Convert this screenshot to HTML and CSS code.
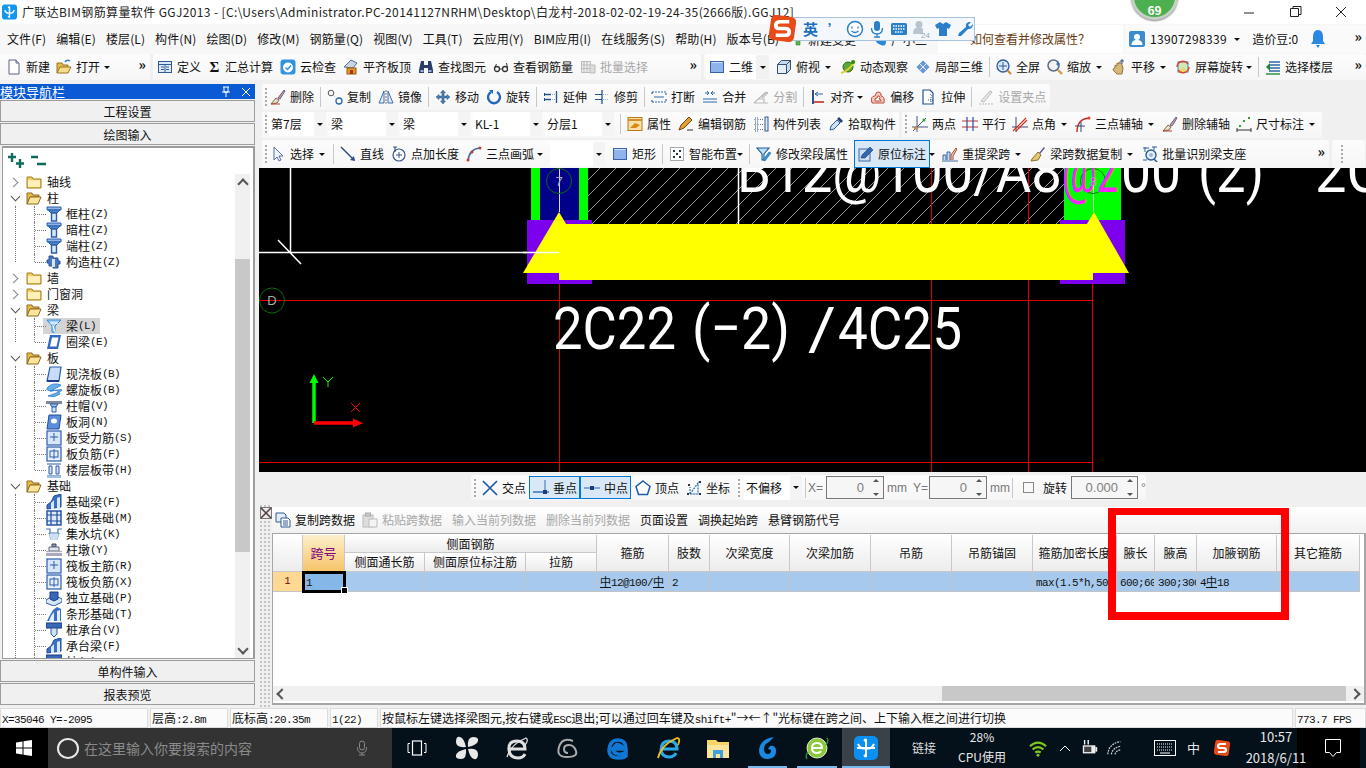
FILE: index.html
```html
<!DOCTYPE html>
<html lang="zh-CN">
<head>
<meta charset="utf-8">
<title>广联达BIM钢筋算量软件 GGJ2013</title>
<link rel="stylesheet" href="styles.css">
</head>
<body>
<svg class="defs" aria-hidden="true">
<symbol id="new" viewBox="0 0 16 16"><path d="M3 1h7l3 3v11H3z" fill="#fff" stroke="#5a6478"/><path d="M10 1v3h3" fill="#d5dbe8" stroke="#5a6478"/></symbol>
<symbol id="open" viewBox="0 0 16 16"><path d="M1 14V4h5l1 2h5v2" fill="#e8b84a" stroke="#9a7420"/><path d="M4 8h11l-3 6H1z" fill="#f8dc8e" stroke="#9a7420"/><path d="M9 3q2-3 5-1" fill="none" stroke="#3a78c8" stroke-width="1.4"/></symbol>
<symbol id="def" viewBox="0 0 16 16"><rect x="1.5" y="2.5" width="13" height="11" fill="#dfe9f5" stroke="#2c5c94"/><path d="M1.5 5.5h13M4 8h3M4 10.5h3M9 8h3M9 10.5h3M8 5.5v8" stroke="#2c5c94" fill="none"/></symbol>
<symbol id="cloud" viewBox="0 0 16 16"><rect x="0.5" y="0.5" width="15" height="15" rx="3" fill="#2f93e0"/><circle cx="8" cy="8.5" r="5" fill="#fff"/><path d="M5.5 8.5l2 2 3.500-4" fill="none" stroke="#2f93e0" stroke-width="1.500"/></symbol>
<symbol id="flush" viewBox="0 0 16 16"><path d="M1 8l7-7 6 3-4 5z" fill="#c8d4e4" stroke="#56708c"/><rect x="4" y="9" width="9" height="6" fill="#e09a28" stroke="#9a5a10"/><path d="M7 11h3v4H7z" fill="#b03018"/></symbol>
<symbol id="find" viewBox="0 0 16 16"><path d="M3 2h3v4h4V2h3l2 9v3h-5V9H6v5H1v-3z" fill="#2a3e6c"/><path d="M2.500 11h3v2h-3zM10.500 11h3v2h-3z" fill="#9cb4dc"/></symbol>
<symbol id="glass" viewBox="0 0 16 16"><circle cx="4" cy="10" r="2.500" fill="none" stroke="#333" stroke-width="1.300"/><circle cx="12" cy="10" r="2.500" fill="none" stroke="#333" stroke-width="1.300"/><path d="M6.500 10h3M1.500 9l2-4M14.500 9l-1-5" fill="none" stroke="#333"/></symbol>
<symbol id="batch" viewBox="0 0 16 16"><path d="M1.500 2.500h9v11h-9zM4 2.500v11M7 2.500v11M1.500 6h9M1.500 9.500h9" fill="#eee" stroke="#bbb"/><path d="M10 6h5v8h-5z" fill="#ddd" stroke="#bbb"/></symbol>
<symbol id="d2" viewBox="0 0 16 16"><rect x="1.500" y="2.500" width="13" height="11" fill="#8fb4ec" stroke="#3a62a8"/><path d="M2.500 3.500h11" stroke="#cfe0fa"/></symbol>
<symbol id="top" viewBox="0 0 16 16"><path d="M1.500 5.500l4-4h9v9l-4 4h-9z" fill="#c8dcec" stroke="#34506c"/><path d="M1.500 5.500h9v9M10.500 5.500l4-4" fill="none" stroke="#34506c"/><path d="M2 6h8v8H2z" fill="#e6eff6"/></symbol>
<symbol id="orbit" viewBox="0 0 16 16"><circle cx="8" cy="8" r="5" fill="#5da832" stroke="#2e6818"/><path d="M1 14Q9 12 15 2" fill="none" stroke="#d8d030" stroke-width="2"/><circle cx="13" cy="3" r="2" fill="#2e8818"/></symbol>
<symbol id="l3d" viewBox="0 0 16 16"><path d="M1 8l7-7 7 7-7 7z" fill="#6c9ad8" stroke="#2a4e84"/><path d="M4.500 4.500l7 7M8 1l7 7M1 8l7 7M11.500 4.500l-7 7M8 1L1 8M15 8l-7 7" stroke="#e4eefa" fill="none"/></symbol>
<symbol id="full" viewBox="0 0 16 16"><circle cx="7" cy="7" r="6" fill="#dce8fa" stroke="#2c5c9c" stroke-width="1.300"/><path d="M7 3v8M3 7h8" stroke="#2c5c9c"/><path d="M11.500 11.500l3.500 3.500" stroke="#d08820" stroke-width="2"/></symbol>
<symbol id="zoom" viewBox="0 0 16 16"><circle cx="6.500" cy="6.500" r="5.500" fill="#f4f4f4" stroke="#5c6c84" stroke-width="1.500"/><path d="M11 2.500v5M9 5h4" stroke="#3068b8"/><path d="M11 11l4 4" stroke="#caa040" stroke-width="2.400"/></symbol>
<symbol id="pan" viewBox="0 0 16 16"><path d="M4 9V6l2 1V4l2 1V3l2 1 1 2 1 3-1 6H6L2 11l1-2z" fill="#d8b878" stroke="#94743c"/><path d="M11 0v5M9 2h4" stroke="#34507c"/></symbol>
<symbol id="scr" viewBox="0 0 16 16"><rect x="3" y="3" width="10" height="10" fill="#cfe8b8" stroke="#3a88c0"/><path d="M3 13l5-5 5 5" fill="#e8d870"/><path d="M2 8a6 6 0 0 1 11-3M14 8a6 6 0 0 1-11 3" fill="none" stroke="#e04030" stroke-width="1.400"/></symbol>
<symbol id="floor" viewBox="0 0 16 16"><path d="M4 3h11M4 6h11M4 9h11M4 12h11" stroke="#2c68a8" stroke-width="1.600"/><path d="M1 8l4-4v8z" fill="#1c8c38"/><path d="M1 15h14" stroke="#1c8c38" stroke-width="1.400"/></symbol>
<symbol id="del" viewBox="0 0 16 16"><path d="M8 9L14 1l1 1-5 8z" fill="#caa868" stroke="#6c5ca0"/><path d="M6 9l3 2-2 3-6 1z" fill="#e8e0d0" stroke="#806848"/><path d="M1 15h9" stroke="#b84030"/></symbol>
<symbol id="copy" viewBox="0 0 16 16"><circle cx="4" cy="4" r="2.800" fill="none" stroke="#5a5a5a"/><circle cx="12" cy="12" r="3" fill="none" stroke="#2c68a8" stroke-width="1.300"/><path d="M6 6l4 4" stroke="#aaa" stroke-dasharray="1 1"/></symbol>
<symbol id="mirror" viewBox="0 0 16 16"><path d="M1 14L6 2v12zM15 14L10 2v12z" fill="#e4ecf8" stroke="#3e6ca8"/><path d="M8 1v14" stroke="#777" stroke-dasharray="2 1"/></symbol>
<symbol id="move" viewBox="0 0 16 16"><path d="M8 1l2.500 3H9v3h3V5.500L15 8l-3 2.500V9H9v3h1.500L8 15l-2.500-3H7V9H4v1.500L1 8l3-2.500V7h3V4H5.500z" fill="#4a7cb0" stroke="#2c5480" stroke-width=".5"/></symbol>
<symbol id="rotate" viewBox="0 0 16 16"><path d="M5 3a6 6 0 1 0 6 0" fill="none" stroke="#2468c0" stroke-width="2.400"/><path d="M3 1l4 0 0 4z" fill="#2468c0"/></symbol>
<symbol id="extend" viewBox="0 0 16 16"><path d="M13.500 2v12M2 5.500h6M2 10.500h6" stroke="#24528c" stroke-width="1.300"/><path d="M1 4h1v3H1zM1 9h1v3H1z" fill="#24528c"/><path d="M9 5.500h3M9 10.500h3" stroke="#8fb0d8" stroke-dasharray="1 1"/></symbol>
<symbol id="trim" viewBox="0 0 16 16"><path d="M8 1v14" stroke="#24528c" stroke-width="1.300"/><path d="M1 5.500h7M1 10.500h7" stroke="#24528c"/><path d="M9 5.500h6M9 10.500h6" stroke="#9cb8dc" stroke-dasharray="1 1"/></symbol>
<symbol id="brk" viewBox="0 0 16 16"><path d="M1 3h14v3M1 3v3M1 13h14v-3M1 13v-3" fill="none" stroke="#2c68a8" stroke-dasharray="2 1" stroke-width="1.200"/><path d="M3 8h10" stroke="#2c68a8"/></symbol>
<symbol id="mrg" viewBox="0 0 16 16"><path d="M1 13h14M1 10h14" stroke="#2c68a8" stroke-width="1.200"/><path d="M3 4h4M9 4h4M5 2l2 2-2 2M11 2L9 4l2 2" fill="none" stroke="#2c68a8"/></symbol>
<symbol id="split" viewBox="0 0 16 16"><path d="M1 14L13 3M1 14h14M5 10h6v4" fill="none" stroke="#bbb" stroke-width="1.200"/><path d="M9 8l5-5 1 1-5 5z" fill="#ddd" stroke="#bbb"/></symbol>
<symbol id="align" viewBox="0 0 16 16"><path d="M3 1v14" stroke="#1c3c78" stroke-width="1.800"/><path d="M4 13h10" stroke="#c03020" stroke-width="1.600"/><path d="M5 5h8M5 5l3-2M5 5l3 2" stroke="#2c68a8" fill="none"/></symbol>
<symbol id="offs" viewBox="0 0 16 16"><path d="M2 14Q0 7 5 7q1-5 4-4 3 1 2 4 4 0 3 7z" fill="#f4ccc4" stroke="#c04838"/><path d="M5 12q-1-3 2-3 0-3 2-2t0 3q2 0 2 2z" fill="#fff" stroke="#c04838"/></symbol>
<symbol id="strc" viewBox="0 0 16 16"><path d="M2 1h7l3 3v11H2z" fill="#fff" stroke="#24528c" stroke-width="1.200"/><path d="M9 5l3 3M7 11h6M10 8v6" stroke="#24528c" stroke-dasharray="1 1"/></symbol>
<symbol id="grip" viewBox="0 0 16 16"><path d="M3 12L12 2l2 1-8 10z" fill="#e8e8e8" stroke="#bbb"/><path d="M1 15h14" stroke="#bbb" stroke-dasharray="2 1"/></symbol>
<symbol id="prop" viewBox="0 0 16 16"><rect x="1" y="1.500" width="14" height="13" fill="#f8e0a8" stroke="#b87818"/><path d="M1 4h14" stroke="#d09030" stroke-width="2"/><path d="M3 12l5-5 5 2-4 3z" fill="#d88818"/></symbol>
<symbol id="edit" viewBox="0 0 16 16"><path d="M1 14l2-5L11 1l3 3-8 8z" fill="#e0a030" stroke="#704810"/><path d="M9 14h6" stroke="#333"/></symbol>
<symbol id="list" viewBox="0 0 16 16"><path d="M2 2h3v3H2zM2 7h3v3H2zM2 12h3v3H2z" fill="#fff" stroke="#2c5c94" stroke-dasharray="1 1"/><path d="M7 3.500h4M7 8.500h4M7 13.500h4" stroke="#777" stroke-dasharray="1 1"/><rect x="12" y="1" width="3" height="14" fill="#e0e8f4" stroke="#2c5c94"/></symbol>
<symbol id="pick" viewBox="0 0 16 16"><path d="M2 14l1-4 6-6 3 3-6 6z" fill="#cfe2f8" stroke="#2c5c94"/><path d="M9 3l2-2 4 4-2 2z" fill="#2c3e78"/></symbol>
<symbol id="twop" viewBox="0 0 16 16"><path d="M0 11h16M5 0v16M1 15L14 2" stroke="#445a80"/><path d="M2 13l2-1-1-1z" fill="#c03020"/><circle cx="12" cy="4" r="1.500" fill="#30a030"/><circle cx="4" cy="12" r="1.500" fill="#e08020"/></symbol>
<symbol id="para" viewBox="0 0 16 16"><path d="M0 5h16M0 11h16" stroke="#c03030" stroke-width="1.200"/><path d="M5 1v14M11 1v14" stroke="#2c50a0" stroke-width="1.200"/></symbol>
<symbol id="ang" viewBox="0 0 16 16"><path d="M0 11h16M4 1v15" stroke="#404870"/><path d="M1 15L14 2M4 15L15 4" stroke="#d03020" stroke-width="1.200"/></symbol>
<symbol id="arc3" viewBox="0 0 16 16"><path d="M2 16Q2 3 14 2" fill="none" stroke="#c03020" stroke-width="1.400"/><path d="M0 10h10M6 6v10" stroke="#30487c"/><circle cx="14" cy="2" r="1.500" fill="#e04030"/></symbol>
<symbol id="dim" viewBox="0 0 16 16"><path d="M1 12v4M15 12v4M1 14h14" stroke="#333"/><path d="M3 9h2v2H3zM7 4h2v2H7zM12 1h2v2h-2z" fill="#30a030"/></symbol>
<symbol id="sel" viewBox="0 0 16 16"><path d="M4 1v13l3-3 2 4 2-1-2-4h4z" fill="#f0f4fa" stroke="#5a70a0"/></symbol>
<symbol id="line" viewBox="0 0 16 16"><path d="M1 1l13 13" stroke="#2c4c84" stroke-width="1.400"/><path d="M15 15l-5-1 4-4z" fill="#2c4c84"/></symbol>
<symbol id="plen" viewBox="0 0 16 16"><circle cx="8" cy="9" r="6" fill="#fff" stroke="#3c5488" stroke-width="1.200"/><path d="M8 6v6M5 9h6" stroke="#3c5488"/><path d="M2 1h4M4 1v5" stroke="#3c5488" stroke-width="1.200"/></symbol>
<symbol id="arcc" viewBox="0 0 16 16"><path d="M2 15Q3 3 14 2" fill="none" stroke="#3c6ca8" stroke-width="1.600"/><circle cx="2" cy="14" r="1.500" fill="#c04030"/><circle cx="14" cy="2" r="1.500" fill="#c04030"/><circle cx="6" cy="6" r="1.500" fill="#c04030"/></symbol>
<symbol id="smart" viewBox="0 0 16 16"><rect x="1.500" y="1.500" width="13" height="13" fill="#fff" stroke="#556" stroke-dasharray="1 1"/><path d="M4 4h2v2H4zM10 4h2v2h-2zM7 7h2v2H7zM4 10h2v2H4zM10 10h2v2h-2z" fill="#234"/></symbol>
<symbol id="modi" viewBox="0 0 16 16"><path d="M1 2h12L8 8v6H6V8z" fill="#bfe0f8" stroke="#1c5c98" stroke-width="1.100"/><path d="M7 14l6-8 2 1-6 8z" fill="#3a98d8" stroke="#1c5c98" stroke-width=".6"/></symbol>
<symbol id="inpl" viewBox="0 0 16 16"><rect x="1" y="3" width="11" height="12" fill="#cfe0f4" stroke="#3a68a8"/><path d="M3 12l1-3 8-8 3 3-8 8z" fill="#3468b0" stroke="#1c3c70" stroke-width=".6"/></symbol>
<symbol id="rext" viewBox="0 0 16 16"><path d="M1 14V9h3v5M5 14V6h3v8" fill="#c8d8ec" stroke="#3c68a0"/><path d="M9 14V9L14 2l1 1-4 7v4" fill="#e8d8c0" stroke="#b84830"/><path d="M0 15h16" stroke="#3c68a0"/></symbol>
<symbol id="cdat" viewBox="0 0 16 16"><path d="M9 7l5-6 1 1-5 6z" fill="#5a4c98"/><path d="M8 6l3 3-3 5-7 1 1-2z" fill="#e4c870" stroke="#8c7030"/></symbol>
<symbol id="bid" viewBox="0 0 16 16"><circle cx="9" cy="9" r="5" fill="#e8eef8" stroke="#2c5c94" stroke-width="1.400"/><circle cx="9" cy="9" r="2" fill="#9cb8dc"/><path d="M1 2h6M3 1v5M10 1h5M12 1v3M1 14h4" stroke="#2c5c94"/><path d="M12 13l3 3" stroke="#2c5c94" stroke-width="1.600"/></symbol>
<symbol id="xi" viewBox="0 0 16 16"><path d="M1 1l14 14M15 1L1 15" stroke="#1c5ca8" stroke-width="1.700"/></symbol>
<symbol id="perp" viewBox="0 0 16 16"><path d="M0 12h16" stroke="#2a6cb8" stroke-width="1.400"/><path d="M12 0v12" stroke="#2a6cb8"/><rect x="10" y="10" width="4" height="4" fill="#1c3c78"/></symbol>
<symbol id="mid" viewBox="0 0 16 16"><path d="M0 8h16" stroke="#5a8cc8" stroke-width="1.400"/><rect x="6" y="6" width="4" height="4" fill="#1c3c78"/></symbol>
<symbol id="vtx" viewBox="0 0 16 16"><path d="M8 1l7 5.500-2.500 8h-9L1 6.500z" fill="#fff" stroke="#1c5ca8" stroke-width="1.500"/></symbol>
<symbol id="crd" viewBox="0 0 16 16"><path d="M4 14L12 3v11zM4 14V7M4 14h8" fill="none" stroke="#2a6cb8" stroke-dasharray="2 1" stroke-width="1.200"/><path d="M2 4h2v2H2zM13 1h2v2h-2zM1 13h2v2H1zM13 13h2v2h-2z" fill="#333"/></symbol>
<symbol id="copyd" viewBox="0 0 16 16"><path d="M1 1h8l2 2v7H1z" fill="#e4ecf8" stroke="#2c5c94"/><path d="M6 6h7l2 2v7H6z" fill="#fff" stroke="#2c5c94"/><path d="M8 9h5M8 11h5M8 13h5" stroke="#2c5c94"/></symbol>
<symbol id="pasted" viewBox="0 0 16 16"><rect x="1" y="3" width="10" height="12" fill="#ddd" stroke="#bbb"/><rect x="3.500" y="1" width="5" height="3" fill="#ccc" stroke="#aaa"/><path d="M7 7h8v8H7z" fill="#f4f4f4" stroke="#bbb"/></symbol>
<symbol id="fc" viewBox="0 0 16 16"><path d="M1 14V3h5l1 2h8v9z" fill="#f4cc60" stroke="#a07c20"/><path d="M2 6h12v7H2z" fill="#fff0b8"/></symbol>
<symbol id="fo" viewBox="0 0 16 16"><path d="M1 14V3h5l1 2h6v2H4z" fill="#e8b84a" stroke="#8c6c20"/><path d="M4 7h11l-3 7H1z" fill="#fce49c" stroke="#8c6c20"/></symbol>
<symbol id="col" viewBox="0 0 16 16"><path d="M1 1h14v3H1z" fill="#8cb4e8" stroke="#2c5cac"/><path d="M2 4h12l-3 3H5z" fill="#4c84d0" stroke="#2c5cac"/><path d="M5.500 7h5v8h-5z" fill="#d4e6fa" stroke="#2c5cac" stroke-width="1.400"/></symbol>
<symbol id="ccol" viewBox="0 0 16 16"><path d="M3 2h4v2h5v3h2v3h-2v4H7v-2H3v-3H1V6h2z" fill="#4878c8" stroke="#2c4c90"/><path d="M6 5h3v8H6z" fill="#d8e6fa"/></symbol>
<symbol id="beam" viewBox="0 0 16 16"><path d="M1 2h14L9 8v6H6V8z" fill="#a8d0f4" stroke="#2c88d8"/><path d="M4 5h8M7 8l2 6" stroke="#fff"/></symbol>
<symbol id="ring" viewBox="0 0 16 16"><path d="M4 1h11l-3 14H1z" fill="#3468c0"/><path d="M6 3.500h6.500L10.500 12.500H4z" fill="#fff"/></symbol>
<symbol id="slab" viewBox="0 0 16 16"><path d="M4 1h11l-2 14H1z" fill="#c8dcf8" stroke="#2c5cb0" stroke-width="1.200"/><path d="M1 15h12" stroke="#1c3c90" stroke-width="2"/></symbol>
<symbol id="spir" viewBox="0 0 16 16"><path d="M15 3Q7 0 2 5t9 3-9 6q7 2 12-2-2-5-8-3t8-5z" fill="#68b0ec" stroke="#2c78c8" stroke-width=".8"/></symbol>
<symbol id="cap" viewBox="0 0 16 16"><path d="M0 3h16v3H0z" fill="#80889a"/><path d="M4 6h8l-2 3H6z" fill="#a8c4ec" stroke="#2c5cac"/><path d="M6 9h4v5H6z" fill="#d8e8fa" stroke="#2c5cac"/></symbol>
<symbol id="hole" viewBox="0 0 16 16"><path d="M3 1h12l-2 14H1z" fill="#5c8cdc" stroke="#1c4ca0"/><ellipse cx="8" cy="7" rx="3" ry="2.500" fill="#fff"/></symbol>
<symbol id="gs" viewBox="0 0 16 16"><rect x="1" y="1" width="14" height="14" fill="#d8e6fa" stroke="#2c5cac" stroke-width="1.200"/><path d="M8 3v8M4 7h8" stroke="#2c5cac"/></symbol>
<symbol id="gf" viewBox="0 0 16 16"><rect x="1" y="1" width="14" height="14" fill="#e8f0fc" stroke="#2c5cac" stroke-width="1.200"/><rect x="4" y="5" width="8" height="6" fill="none" stroke="#2c5cac"/><path d="M8 3v10" stroke="#2c5cac"/></symbol>
<symbol id="band" viewBox="0 0 16 16"><path d="M1 2h14M1 14h14" stroke="#2c5cac" stroke-width="1.200"/><path d="M3 4h3v8H3zM10 4h3v8h-3z" fill="#cfe0f8" stroke="#2c5cac"/><path d="M1 14h14v2H1z" fill="#9cc0ec"/></symbol>
<symbol id="fbm" viewBox="0 0 16 16"><path d="M1 15V11l4-3 3-6 7-2v13z" fill="#3a70c4" stroke="#1c4c98"/><path d="M5 15V9l3-3v9zM11 4v11h3V3z" fill="#d8e6fa"/></symbol>
<symbol id="raft" viewBox="0 0 16 16"><rect x="1" y="1" width="14" height="14" fill="#dfeafa" stroke="#1c4ca0" stroke-width="1.400"/><path d="M1 5h14M1 11h14M5 1v14M11 1v14" stroke="#1c4ca0" stroke-width="1.200"/></symbol>
<symbol id="pit" viewBox="0 0 16 16"><path d="M0 3h4v4h8V3h4M3 7l2 6h6l2-6" fill="none" stroke="#4878b8" stroke-width="1.200"/><path d="M3 8h10l-2 6H5z" fill="#cfe0f4"/></symbol>
<symbol id="pier" viewBox="0 0 16 16"><path d="M6 2h4v3H6z" fill="#8098c0" stroke="#445"/><path d="M3 5h10v4H3z" fill="#dfe6f0" stroke="#667"/><path d="M0 9h16v5H0z" fill="#aab"/><path d="M0 10h16v1H0z" fill="#eef"/></symbol>
<symbol id="indep" viewBox="0 0 16 16"><path d="M0 10l8-5 8 4v3l-8 4-8-3z" fill="#d8e6fa" stroke="#2c5cac"/><path d="M4 2h8v7l-4 2-4-2z" fill="#3a68b8" stroke="#1c3c80"/></symbol>
<symbol id="strip" viewBox="0 0 16 16"><path d="M1 15l3-6 3-5 4-3 4 2v12z" fill="#3a70c4"/><path d="M3 15l2-5 3-4v9zM11 5l3-1v11h-3z" fill="#e4eefa"/></symbol>
<symbol id="pile" viewBox="0 0 16 16"><path d="M0 1h16v5H0z" fill="#3868b8" stroke="#1c3c80"/><path d="M5 6h6v6l-3 3-3-3z" fill="#cfe0f4" stroke="#2c5c94"/></symbol>
<symbol id="win" viewBox="0 0 16 16"><path d="M0 2.500l6.500-1v6H0zM7.500 1.300L16 0v7.500H7.500zM0 8.500h6.500v6l-6.500-1zM7.500 8.500H16V16l-8.500-1.300z" fill="#fff"/></symbol>
<symbol id="mic" viewBox="0 0 16 16"><rect x="5.500" y="1" width="5" height="9" rx="2.500" fill="none" stroke="#8a8a8a"/><path d="M3.500 7v1.500a4.500 4.500 0 0 0 9 0V7M8 13v2M5 15h6" fill="none" stroke="#8a8a8a"/></symbol>
<symbol id="tv" viewBox="0 0 20 16"><rect x="5.500" y="1" width="9" height="14" fill="none" stroke="#fff" stroke-width="1.200"/><path d="M3 3.500H1v9h2M17 3.500h2v9h-2" fill="none" stroke="#fff"/></symbol>
<symbol id="pin" viewBox="0 0 24 24"><path d="M11 11Q1 12 1 6t4-5 6 10zM13 11Q12 1 18 1t5 4-10 6zM13 13q10-1 10 5t-4 5-6-10zM11 13q1 10-5 10t-5-4 10-6z" fill="#e8e8e8"/></symbol>
<symbol id="em" viewBox="0 0 24 24"><path d="M4 13h16q0-8-8-8-9 0-8 9 1 8 9 8 5 0 7-4" fill="none" stroke="#e0e0e0" stroke-width="3"/><path d="M2 21Q6 8 21 2q3 2-1 7" fill="none" stroke="#e0e0e0" stroke-width="1.300"/></symbol>
<symbol id="swirl" viewBox="0 0 24 24"><path d="M17 5Q6 1 3 11t8 10 9-6-7-6-5 4 4 4" fill="none" stroke="#aaa" stroke-width="2"/></symbol>
<symbol id="edge" viewBox="0 0 24 24"><path d="M4 13h15q0-9-8-9-8 0-9 10 0 8 10 8 5 0 7-2v-4q-4 3-8 2-5-1-5-5M8 10q2-3 6 0z" fill="none" stroke="#0f78d4" stroke-width="3.500"/></symbol>
<symbol id="ie" viewBox="0 0 24 24"><path d="M5 13h15q0-8-8-8-8 0-8 9 1 7 8 7 5 0 7-4" fill="none" stroke="#2aa8e8" stroke-width="3"/><path d="M1 22Q4 9 20 2q4 0 1 7" fill="none" stroke="#e8c020" stroke-width="1.800"/></symbol>
<symbol id="folder" viewBox="0 0 24 24"><path d="M1 4h9l2 2h11v16H1z" fill="#f8d468"/><path d="M1 9h22v13H1z" fill="#fce69c"/><path d="M7 14h10v8h-3v-4h-4v4H7z" fill="#42a0e0"/></symbol>
<symbol id="gg" viewBox="0 0 24 24"><path d="M18 1Q4 3 3 14q0 9 9 9 9-1 8-9-1-5-6-4l-2 3 3 1q0 4-3 4-4 0-4-5 0-5 5-7z" fill="#1a88e0"/></symbol>
<symbol id="ge" viewBox="0 0 24 24"><circle cx="12" cy="12" r="10" fill="#8cc83c" stroke="#dff0c0"/><path d="M7 12h10q0-5-5-5t-5 5 5 5q3 0 4-2" fill="none" stroke="#fff" stroke-width="2"/><path d="M2 23Q0 20 3 16M22 2q2 3-1 7" fill="none" stroke="#2a8838" stroke-width="1.500"/></symbol>
<symbol id="app" viewBox="0 0 24 24"><rect width="24" height="24" rx="5" fill="#0a90f0"/><path d="M12 3v18M12 3l-2 2M12 21l-2-2M3 12h18M4 8q3 6 8 4M20 8q-3 6-8 4" fill="none" stroke="#fff" stroke-width="2"/></symbol>
<symbol id="wifi" viewBox="0 0 20 20"><path d="M1 8q9-8 18 0M4 11.500q6-5 12 0M7 15q3-2 6 0" fill="none" stroke="#7cc820" stroke-width="2.400"/><circle cx="10" cy="18" r="1.600" fill="#7cc820"/></symbol>
<symbol id="batt" viewBox="0 0 20 20"><rect x="2" y="7" width="14" height="9" fill="#eee"/><rect x="16" y="9" width="2" height="5" fill="#eee"/><path d="M4 1v5M8 1v5" stroke="#fff" stroke-width="1.500"/><rect x="3.500" y="8.500" width="8" height="6" fill="#444"/></symbol>
<symbol id="wifid" viewBox="0 0 20 20"><path d="M2 17Q3 5 16 3M6 17q1-7 10-9M10 17q1-4 6-5" fill="none" stroke="#ccc" stroke-width="1.400" stroke-dasharray="2 1"/></symbol>
<symbol id="kbd" viewBox="0 0 22 16"><rect x=".5" y=".5" width="21" height="15" fill="none" stroke="#fff"/><path d="M3 4h16M3 7h16M3 10h16" stroke="#fff" stroke-dasharray="1 1"/><path d="M6 13h10" stroke="#fff"/></symbol>
<symbol id="sg" viewBox="0 0 16 16"><rect x=".5" y=".5" width="15" height="15" rx="3" fill="#e84a18" transform="rotate(8 8 8)"/><path d="M12 4H6.500Q4 4 4 6t2.500 2h3Q12 8 12 10t-2.500 2H4" fill="none" stroke="#fff" stroke-width="2.200"/></symbol>
<symbol id="msg" viewBox="0 0 16 18"><path d="M.5.500h15v13h-4l-3.500 4-3.500-4h-4z" fill="none" stroke="#fff"/></symbol>
<symbol id="user" viewBox="0 0 16 16"><rect width="16" height="16" rx="2" fill="#3c8cd0"/><circle cx="8" cy="6" r="3" fill="#fff"/><path d="M2.500 14q0-5 5.500-5t5.500 5z" fill="#fff"/></symbol>
<symbol id="bell" viewBox="0 0 16 20"><path d="M8 1q-5 0-5 7v4l-2 3h14l-2-3V8q0-7-5-7z" fill="#2a88e4"/><path d="M6 16h4l-2 3z" fill="#2a88e4"/></symbol>
<symbol id="logo" viewBox="0 0 16 16"><rect width="16" height="16" rx="3" fill="#1496ee"/><path d="M8 2v12M8 2L6.500 3.500M8 14l-1.500-1.500M3 6q1 4 5 3M13 6q-1 4-5 3" fill="none" stroke="#fff" stroke-width="1.500"/></symbol>
<symbol id="smile" viewBox="0 0 18 18"><circle cx="9" cy="9" r="7.500" fill="#fff" stroke="#2a7fc8" stroke-width="1.500"/><path d="M6 6.500v2M12 6.500v2M5.500 11q3.500 3 7 0" fill="none" stroke="#2a7fc8" stroke-width="1.300"/></symbol>
<symbol id="imic" viewBox="0 0 18 18"><rect x="6" y="1" width="6" height="10" rx="3" fill="#2a7fc8"/><path d="M3.500 8q0 6 5.500 6t5.500-6M9 14v3M6 17h6" fill="none" stroke="#2a7fc8" stroke-width="1.300"/></symbol>
<symbol id="ikbd" viewBox="0 0 18 18"><rect x="1" y="3" width="16" height="12" rx="1.500" fill="#2a7fc8"/><path d="M3 6h12M3 9h12M5 12h8" stroke="#fff" stroke-width="1.300" stroke-dasharray="1.500 1"/></symbol>
<symbol id="ipers" viewBox="0 0 18 18"><circle cx="7" cy="4.500" r="3.500" fill="#b8c4d0"/><path d="M1 14q0-7 6-7 3 0 4 2v5z" fill="#b8c4d0"/><text x="9" y="17.500" font-size="8" font-family="Liberation Sans" fill="#9aa8b8">24</text></symbol>
<symbol id="ishirt" viewBox="0 0 18 18"><path d="M6 2l3 2 3-2 5 3-2 4-2-1v8H5V8L3 9 1 5z" fill="#2a7fc8"/></symbol>
<symbol id="iwr" viewBox="0 0 18 18"><path d="M2 16l1-3 7-6q-1-4 3-5l2 0-3 3 2 2 3-3q0 5-5 5l-7 7z" fill="#2a7fc8"/></symbol>
<symbol id="plus" viewBox="0 0 20 18"><path d="M5 1v9M1 5h8M13 7v9M9 11.500h8" stroke="#0e6c5c" stroke-width="2.400"/></symbol>
<symbol id="minus" viewBox="0 0 20 18"><path d="M2 5h7M8 12h9" stroke="#0e6c5c" stroke-width="2.400"/></symbol>
<symbol id="chg" viewBox="0 0 12 12"><path d="M1 6l5-5 5 5H8v5H4V6z" fill="#5ab848" stroke="#2e8028" stroke-width=".6"/></symbol>
<symbol id="gxi" viewBox="0 0 12 12"><path d="M1 7q0-6 5-6t5 6-5 4-5-4z" fill="#2a88d8"/></symbol>
</svg>

<div class="app">
  <header class="title">
    <svg class="logo"><use href="#logo"/></svg>
    <span class="ttl">广联达BIM钢筋算量软件 GGJ2013 - [C:\Users\Administrator.PC-20141127NRHM\Desktop\白龙村-2018-02-02-19-24-35(2666版).GGJ12]</span>
    <div class="wctl">
      <svg class="wb" viewBox="0 0 46 24"><path d="M18 13h10" stroke="#222"/></svg>
      <svg class="wb" viewBox="0 0 46 24"><path d="M18.500 8.500h8v8h-8zM21 8V6.500h8v8h-2" fill="none" stroke="#222"/></svg>
      <svg class="wb" viewBox="0 0 46 24"><path d="M18 7l10 10M28 7L18 17" stroke="#222"/></svg>
    </div>
  </header>

  <nav class="menu">
    <div class="menus">
      <span>文件(F)</span><span>编辑(E)</span><span>楼层(L)</span><span>构件(N)</span><span>绘图(D)</span><span>修改(M)</span><span>钢筋量(Q)</span><span>视图(V)</span><span>工具(T)</span><span>云应用(Y)</span><span>BIM应用(I)</span><span>在线服务(S)</span><span>帮助(H)</span><span>版本号(B)</span>
    </div>
    <div class="promo">
      <svg class="i12"><use href="#chg"/></svg><span>新建变更</span><svg class="i12 g2"><use href="#gxi"/></svg><span class="gx">广小二</span>
    </div>
    <div class="ask">如何查看并修改属性？</div>
    <div class="acct">
      <svg class="i"><use href="#user"/></svg><span class="num13">13907298339</span><span class="ar"></span>
      <span class="bean">造价豆:0</span>
      <svg class="bell"><use href="#bell"/></svg>
      <span class="more">»</span>
    </div>
  </nav>

  <div class="tbrow r1">
    <div class="tb sa">
      <span class="it"><svg class="i"><use href="#new"/></svg>新建</span>
      <span class="it"><svg class="i"><use href="#open"/></svg>打开</span><span class="ar mn"></span>
      <span class="more">»</span>
    </div>
    <div class="tb sb">
      <span class="it"><svg class="i"><use href="#def"/></svg>定义</span>
      <span class="it"><b class="sig">Σ</b>汇总计算</span>
      <span class="it"><svg class="i"><use href="#cloud"/></svg>云检查</span>
      <span class="it"><svg class="i"><use href="#flush"/></svg>平齐板顶</span>
      <span class="it"><svg class="i"><use href="#find"/></svg>查找图元</span>
      <span class="it"><svg class="i"><use href="#glass"/></svg>查看钢筋量</span>
      <span class="it off"><svg class="i"><use href="#batch"/></svg>批量选择</span>
      <span class="more">»</span>
    </div>
    <div class="tb sc">
      <span class="it wh"><svg class="i"><use href="#d2"/></svg>二维</span><span class="drop"></span>
      <span class="it"><svg class="i"><use href="#top"/></svg>俯视</span><span class="ar mn"></span>
      <span class="it"><svg class="i"><use href="#orbit"/></svg>动态观察</span>
      <span class="it"><svg class="i"><use href="#l3d"/></svg>局部三维</span>
      <span class="sep"></span>
      <span class="it"><svg class="i"><use href="#full"/></svg>全屏</span>
      <span class="it"><svg class="i"><use href="#zoom"/></svg>缩放</span><span class="ar mn"></span>
      <span class="it"><svg class="i"><use href="#pan"/></svg>平移</span><span class="ar mn"></span>
      <span class="it"><svg class="i"><use href="#scr"/></svg>屏幕旋转</span><span class="ar mn tight"></span>
      <span class="sep"></span>
      <span class="it"><svg class="i"><use href="#floor"/></svg>选择楼层</span>
      <span class="more">»</span>
    </div>
  </div>

  <div class="main">
    <aside class="side">
      <div class="navh"><span>模块导航栏</span><span class="navc">
        <svg class="n" viewBox="0 0 12 12"><path d="M3 1h6M4 1v5h4V1M2 6h8M6 6v5" stroke="#fff" fill="none"/></svg>
        <svg class="n" viewBox="0 0 12 12"><path d="M2 2l8 8M10 2l-8 8" stroke="#fff"/></svg></span></div>
      <div class="nbtn">工程设置</div>
      <div class="nbtn">绘图输入</div>
      <div class="panel">
        <div class="ptool"><svg class="pm"><use href="#plus"/></svg><svg class="pm"><use href="#minus"/></svg></div>
        <div class="treewrap">
          <div class="tree">
            <div class="fr"><span class="chev c"></span><svg class="i"><use href="#fc"/></svg>轴线</div>
            <div class="grp">
              <div class="fr"><span class="chev o"></span><svg class="i"><use href="#fo"/></svg>柱</div>
              <div class="kids">
                <div class="kr"><svg class="i"><use href="#col"/></svg>框柱<i>(Z)</i></div>
                <div class="kr"><svg class="i"><use href="#col"/></svg>暗柱<i>(Z)</i></div>
                <div class="kr"><svg class="i"><use href="#col"/></svg>端柱<i>(Z)</i></div>
                <div class="kr"><svg class="i"><use href="#ccol"/></svg>构造柱<i>(Z)</i></div>
              </div>
            </div>
            <div class="fr"><span class="chev c"></span><svg class="i"><use href="#fc"/></svg>墙</div>
            <div class="fr"><span class="chev c"></span><svg class="i"><use href="#fc"/></svg>门窗洞</div>
            <div class="grp">
              <div class="fr"><span class="chev o"></span><svg class="i"><use href="#fo"/></svg>梁</div>
              <div class="kids">
                <div class="kr"><span class="hl"><svg class="i"><use href="#beam"/></svg>梁<i>(L)</i></span></div>
                <div class="kr"><svg class="i"><use href="#ring"/></svg>圈梁<i>(E)</i></div>
              </div>
            </div>
            <div class="grp">
              <div class="fr"><span class="chev o"></span><svg class="i"><use href="#fo"/></svg>板</div>
              <div class="kids">
                <div class="kr"><svg class="i"><use href="#slab"/></svg>现浇板<i>(B)</i></div>
                <div class="kr"><svg class="i"><use href="#spir"/></svg>螺旋板<i>(B)</i></div>
                <div class="kr"><svg class="i"><use href="#cap"/></svg>柱帽<i>(V)</i></div>
                <div class="kr"><svg class="i"><use href="#hole"/></svg>板洞<i>(N)</i></div>
                <div class="kr"><svg class="i"><use href="#gs"/></svg>板受力筋<i>(S)</i></div>
                <div class="kr"><svg class="i"><use href="#gf"/></svg>板负筋<i>(F)</i></div>
                <div class="kr"><svg class="i"><use href="#band"/></svg>楼层板带<i>(H)</i></div>
              </div>
            </div>
            <div class="grp">
              <div class="fr"><span class="chev o"></span><svg class="i"><use href="#fo"/></svg>基础</div>
              <div class="kids">
                <div class="kr"><svg class="i"><use href="#fbm"/></svg>基础梁<i>(F)</i></div>
                <div class="kr"><svg class="i"><use href="#raft"/></svg>筏板基础<i>(M)</i></div>
                <div class="kr"><svg class="i"><use href="#pit"/></svg>集水坑<i>(K)</i></div>
                <div class="kr"><svg class="i"><use href="#pier"/></svg>柱墩<i>(Y)</i></div>
                <div class="kr"><svg class="i"><use href="#gs"/></svg>筏板主筋<i>(R)</i></div>
                <div class="kr"><svg class="i"><use href="#gf"/></svg>筏板负筋<i>(X)</i></div>
                <div class="kr"><svg class="i"><use href="#indep"/></svg>独立基础<i>(P)</i></div>
                <div class="kr"><svg class="i"><use href="#strip"/></svg>条形基础<i>(T)</i></div>
                <div class="kr"><svg class="i"><use href="#pile"/></svg>桩承台<i>(V)</i></div>
                <div class="kr"><svg class="i"><use href="#fbm"/></svg>承台梁<i>(F)</i></div>
                <div class="kr"><svg class="i"><use href="#pile"/></svg>桩<i>(U)</i></div>
              </div>
            </div>
          </div>
          <div class="vsb"><span class="sbu"></span><span class="vth"></span><span class="sbd"></span></div>
        </div>
      </div>
      <div class="nbtn low">单构件输入</div>
      <div class="nbtn low">报表预览</div>
    </aside>

    <section class="work">
      <div class="tbrow r2">
        <div class="tb sd">
          <span class="hnd"></span>
          <span class="it"><svg class="i"><use href="#del"/></svg>删除</span><span class="sep"></span>
          <span class="it"><svg class="i"><use href="#copy"/></svg>复制</span>
          <span class="it"><svg class="i"><use href="#mirror"/></svg>镜像</span><span class="sep"></span>
          <span class="it"><svg class="i"><use href="#move"/></svg>移动</span>
          <span class="it"><svg class="i"><use href="#rotate"/></svg>旋转</span><span class="sep"></span>
          <span class="it"><svg class="i"><use href="#extend"/></svg>延伸</span>
          <span class="it"><svg class="i"><use href="#trim"/></svg>修剪</span><span class="sep"></span>
          <span class="it"><svg class="i"><use href="#brk"/></svg>打断</span>
          <span class="it"><svg class="i"><use href="#mrg"/></svg>合并</span>
          <span class="it off"><svg class="i"><use href="#split"/></svg>分割</span><span class="sep"></span>
          <span class="it"><svg class="i"><use href="#align"/></svg>对齐</span><span class="ar mn tight"></span>
          <span class="it"><svg class="i"><use href="#offs"/></svg>偏移</span>
          <span class="it"><svg class="i"><use href="#strc"/></svg>拉伸</span><span class="sep"></span>
          <span class="it off"><svg class="i"><use href="#grip"/></svg>设置夹点</span>
        </div>
      </div>

      <div class="tbrow r3">
        <div class="tb se">
          <span class="hnd"></span>
          <div class="cb w1"><span>第7层</span><span class="cba"></span></div>
          <div class="cb"><span>梁</span><span class="cba"></span></div>
          <div class="cb"><span>梁</span><span class="cba"></span></div>
          <div class="cb"><span>KL-1</span><span class="cba"></span></div>
          <div class="cb lastc"><span>分层1</span><span class="cba"></span></div>
          <span class="sep"></span>
          <span class="it"><svg class="i"><use href="#prop"/></svg>属性</span>
          <span class="it"><svg class="i"><use href="#edit"/></svg>编辑钢筋</span>
          <span class="it"><svg class="i"><use href="#list"/></svg>构件列表</span>
          <span class="it"><svg class="i"><use href="#pick"/></svg>拾取构件</span>
        </div>
        <div class="tb sf">
          <span class="hnd"></span>
          <span class="it"><svg class="i"><use href="#twop"/></svg>两点</span>
          <span class="it"><svg class="i"><use href="#para"/></svg>平行</span>
          <span class="it"><svg class="i"><use href="#ang"/></svg>点角</span><span class="ar mn"></span>
          <span class="it"><svg class="i"><use href="#arc3"/></svg>三点辅轴</span><span class="ar mn"></span>
          <span class="it"><svg class="i"><use href="#del"/></svg>删除辅轴</span>
          <span class="it"><svg class="i"><use href="#dim"/></svg>尺寸标注</span><span class="ar mn"></span>
        </div>
      </div>

      <div class="tbrow r4">
        <div class="tb sg">
          <span class="hnd"></span>
          <span class="it"><svg class="i"><use href="#sel"/></svg>选择</span><span class="ar mn"></span><span class="sep"></span>
          <span class="it"><svg class="i"><use href="#line"/></svg>直线</span>
          <span class="it"><svg class="i"><use href="#plen"/></svg>点加长度</span>
          <span class="it"><svg class="i"><use href="#arcc"/></svg>三点画弧</span><span class="ar mn tight"></span>
          <div class="cb w2"><span></span><span class="cba"></span></div>
          <span class="it"><svg class="i"><use href="#d2"/></svg>矩形</span><span class="sep"></span>
          <span class="it"><svg class="i"><use href="#smart"/></svg>智能布置</span><span class="ar mn tight t6"></span><span class="sep"></span>
          <span class="it"><svg class="i"><use href="#modi"/></svg>修改梁段属性</span>
          <span class="it act"><svg class="i"><use href="#inpl"/></svg>原位标注</span><span class="ar mn tight t6"></span>
          <span class="it"><svg class="i"><use href="#rext"/></svg>重提梁跨</span><span class="ar mn"></span>
          <span class="it"><svg class="i"><use href="#cdat"/></svg>梁跨数据复制</span><span class="ar mn"></span>
          <span class="it"><svg class="i"><use href="#bid"/></svg>批量识别梁支座</span>
          <span class="more">»</span>
        </div>
        <div class="tb sh"><span class="hnd"></span></div>
      </div>

      <div class="canvas">
        <svg class="cad" viewBox="259 168 1107 304" xmlns="http://www.w3.org/2000/svg">
          <defs><pattern id="hatch" patternUnits="userSpaceOnUse" width="16" height="16"><path d="M0 16L16 0" stroke="#d8d8d8" stroke-width=".7"/></pattern></defs>
          <rect x="588" y="168" width="476" height="56" fill="url(#hatch)"/>
          <path d="M290.500 168v84M259 252.500h300M278 240l23 24M738.500 168v56" stroke="#fff" stroke-width="1.500" fill="none"/>
          <rect x="531" y="168" width="57" height="52" fill="#0f0"/><rect x="540" y="168" width="39" height="52" fill="#00008b"/>
          <rect x="1064" y="168" width="57" height="52" fill="#0f0"/>
          <rect x="527" y="220" width="65" height="64" fill="#7c00ee"/><rect x="1060" y="220" width="65" height="64" fill="#7c00ee"/>
          <path d="M559.500 168v44M1093.500 168v44" stroke="#ddd"/>
          <path d="M559 212l36 61H523z" fill="#ff0"/><path d="M1094 212l35 61h-71z" fill="#ff0"/>
          <rect x="559" y="224" width="534" height="56" fill="#ff0"/>
          <path d="M523 252.500h36" stroke="#fff" stroke-width="1.500"/>
          <path d="M259 300.500h834M259 462.500h834M559.500 284v188M931.500 168v56M931.500 280v192M1028.500 168v56M1028.500 280v192M1092.500 284v188" stroke="#e00000" fill="none"/>
          <circle cx="559" cy="181" r="12.500" fill="none" stroke="#0a6a0a"/>
          <circle cx="1093" cy="181" r="12.500" fill="none" stroke="#0a6a0a"/>
          <circle cx="272" cy="300.500" r="12.500" fill="none" stroke="#0a6a0a"/>
          <text x="559" y="186" class="ax">7</text><text x="272" y="305" class="ax">D</text>
          <text x="737" y="192" class="big" textLength="325" lengthAdjust="spacingAndGlyphs">B12@100/A8</text>
          <text x="1062" y="192" class="big mag" textLength="56" lengthAdjust="spacingAndGlyphs">@2</text>
          <text x="1093" y="186" class="ax">8</text>
          <text x="1121" y="192" class="big" textLength="60" lengthAdjust="spacingAndGlyphs">00</text>
          <text x="1198" y="192" class="big" textLength="66" lengthAdjust="spacingAndGlyphs">(2)</text>
          <text x="1315" y="192" class="big" textLength="68" lengthAdjust="spacingAndGlyphs">2C</text>
          <text x="553" y="349" class="big" textLength="123" lengthAdjust="spacingAndGlyphs">2C22</text>
          <text x="692" y="349" class="big" textLength="98" lengthAdjust="spacingAndGlyphs">(−2)</text>
          <text x="808" y="349" class="big" textLength="28" lengthAdjust="spacingAndGlyphs">/</text>
          <text x="838" y="349" class="big" textLength="124" lengthAdjust="spacingAndGlyphs">4C25</text>
          <path d="M314 423V382" stroke="#0f0" stroke-width="3.500"/><path d="M314 374l4.500 9h-9z" fill="#0f0"/>
          <path d="M314 423h41" stroke="#f00" stroke-width="3.500"/><path d="M363 423l-10 4.500v-9z" fill="#f00"/>
          <path d="M323 377l5 5 5-5M328 382v5" stroke="#0f0" fill="none"/>
          <path d="M351 403l9 9M360 403l-9 9" stroke="#f00" fill="none"/>
        </svg>
      </div>

      <div class="snaprow">
        <div class="tb si">
          <span class="hnd"></span>
          <span class="it"><svg class="i"><use href="#xi"/></svg>交点</span>
          <div class="pair">
            <span class="it on"><svg class="i"><use href="#perp"/></svg>垂点</span>
            <span class="it on"><svg class="i"><use href="#mid"/></svg>中点</span>
          </div>
          <span class="it nomg"><svg class="i"><use href="#vtx"/></svg>顶点</span>
          <span class="it"><svg class="i"><use href="#crd"/></svg>坐标</span>
          <span class="hnd sp"></span>
          <div class="cb w3"><span>不偏移</span><span class="cba"></span></div>
          <span class="sep"></span>
          <span class="gl">X=</span>
          <div class="spin"><span>0</span><span class="sa2"></span></div>
          <span class="gl">mm</span>
          <span class="gl y">Y=</span>
          <div class="spin"><span>0</span><span class="sa2"></span></div>
          <span class="gl">mm</span>
          <span class="sep"></span>
          <span class="chk"></span>
          <span class="rt">旋转</span>
          <div class="spin wide"><span>0.000</span><span class="sa2"></span></div>
          <span class="gl">°</span>
        </div>
      </div>

      <div class="prop">
        <div class="grip">
          <svg class="xbox" viewBox="0 0 12 12"><rect x=".5" y=".5" width="11" height="11" fill="#f4e4e4" stroke="#777"/><path d="M1 1l10 10M11 1L1 11" stroke="#444" stroke-width="1.500"/></svg>
        </div>
        <div class="pcol">
          <div class="ptb">
            <span class="it"><svg class="i"><use href="#copyd"/></svg>复制跨数据</span>
            <span class="it off"><svg class="i"><use href="#pasted"/></svg>粘贴跨数据</span>
            <span class="pt off">输入当前列数据</span>
            <span class="pt off">删除当前列数据</span>
            <span class="pt">页面设置</span>
            <span class="pt">调换起始跨</span>
            <span class="pt">悬臂钢筋代号</span>
          </div>
          <div class="gridbox">
            <div class="grid">
              <div class="gh tall"></div>
              <div class="gh tall yel">跨号</div>
              <div class="gh wide3">侧面钢筋</div>
              <div class="gh tall">箍筋</div>
              <div class="gh tall">肢数</div>
              <div class="gh tall">次梁宽度</div>
              <div class="gh tall">次梁加筋</div>
              <div class="gh tall">吊筋</div>
              <div class="gh tall">吊筋锚固</div>
              <div class="gh tall">箍筋加密长度</div>
              <div class="gh tall">腋长</div>
              <div class="gh tall">腋高</div>
              <div class="gh tall">加腋钢筋</div>
              <div class="gh tall">其它箍筋</div>
              <div class="gh">侧面通长筋</div>
              <div class="gh">侧面原位标注筋</div>
              <div class="gh">拉筋</div>
              <div class="gd rh">1</div>
              <div class="gd cur"><i>1</i></div>
              <div class="gd"></div>
              <div class="gd"></div>
              <div class="gd"></div>
              <div class="gd"><u>中</u><i>12@100/</i><u>中</u></div>
              <div class="gd"><i>2</i></div>
              <div class="gd"></div>
              <div class="gd"></div>
              <div class="gd"></div>
              <div class="gd"></div>
              <div class="gd"><i>max(1.5*h,500</i></div>
              <div class="gd"><i>600;600</i></div>
              <div class="gd"><i>300;300</i></div>
              <div class="gd"><i>4</i><u>中</u><i>18</i></div>
              <div class="gd"></div>
            </div>
            <div class="hsb"><span class="sbl"></span><span class="hth"></span><span class="sbr"></span></div>
          </div>
        </div>
      </div>
    </section>
  </div>

  <footer class="status">
    <div class="st s1"><i>X=35046 Y=-2095</i></div>
    <div class="st s2">层高<i>:2.8m</i></div>
    <div class="st s3">底标高<i>:20.35m</i></div>
    <div class="st s4"><i>1(22)</i></div>
    <div class="st s5">按鼠标左键选择梁图元,按右键或<i>ESC</i>退出;可以通过回车键及<i>shift+</i>"→←↑"光标键在跨之间、上下输入框之间进行切换</div>
    <div class="st s6"><i>773.7 FPS</i></div>
  </footer>

  <div class="task">
    <div class="start"><svg class="w16"><use href="#win"/></svg></div>
    <div class="search"><span class="ring"></span><span class="stxt">在这里输入你要搜索的内容</span><svg class="smic"><use href="#mic"/></svg></div>
    <div class="slots">
      <div class="slot"><svg class="tv"><use href="#tv"/></svg></div>
      <div class="slot"><svg class="t24"><use href="#pin"/></svg></div>
      <div class="slot"><svg class="t24"><use href="#em"/></svg></div>
      <div class="slot"><svg class="t24"><use href="#swirl"/></svg></div>
      <div class="slot"><svg class="t24"><use href="#edge"/></svg></div>
      <div class="slot"><svg class="t24"><use href="#ie"/></svg></div>
      <div class="slot"><svg class="t24"><use href="#folder"/></svg></div>
      <div class="slot run"><svg class="t24"><use href="#gg"/></svg></div>
      <div class="slot run"><svg class="t24"><use href="#ge"/></svg></div>
      <div class="slot run cura"><svg class="t24"><use href="#app"/></svg></div>
    </div>
    <div class="tray">
      <span class="tt">链接</span>
      <span class="cpu">28%<br>CPU使用</span>
      <span></span>
      <svg class="t18"><use href="#wifi"/></svg>
      <svg class="caret" viewBox="0 0 12 8"><path d="M1 7l5-5 5 5" fill="none" stroke="#fff"/></svg>
      <svg class="t18"><use href="#batt"/></svg>
      <svg class="t18"><use href="#wifid"/></svg>
      <span></span>
      <svg class="tk"><use href="#kbd"/></svg>
      <span class="zh">中</span>
      <svg class="t16"><use href="#sg"/></svg>
      <span class="clock">10:57<br>2018/6/11</span>
      <svg class="tmsg"><use href="#msg"/></svg>
    </div>
  </div>

  <div class="badge"><span>69</span></div>
  <div class="ime">
    <svg class="imes"><use href="#sg"/></svg>
    <div class="imebar">
      <b>英</b><span class="dot">’</span>
      <svg class="i18"><use href="#smile"/></svg>
      <svg class="i18"><use href="#imic"/></svg>
      <svg class="i18"><use href="#ikbd"/></svg>
      <svg class="i18"><use href="#ipers"/></svg>
      <svg class="i18"><use href="#ishirt"/></svg>
      <svg class="i18"><use href="#iwr"/></svg>
    </div>
  </div>
  <div class="redbox"></div>
</div>
</body>
</html>
```

FILE: styles.css
```css
* { box-sizing: border-box; }
html, body { margin: 0; padding: 0; }
body { font: 12px/16px "Noto Sans CJK SC", sans-serif; color: #111; background: #f0f0f0; overflow: hidden; }
.defs { position: absolute; width: 0; height: 0; }
.app { position: relative; width: 1366px; height: 768px; overflow: hidden; display: flex; flex-direction: column; background: #f0f0f0; }
svg { display: block; flex: none; }
i { font: 11px/16px "Liberation Mono", monospace; font-style: normal; letter-spacing: -.6px; }

.title { height: 24px; background: #fff; display: flex; align-items: center; padding-left: 2px; }
.logo { width: 15px; height: 16px; }
.ttl { margin-left: 5px; font-size: 12px; letter-spacing: .37px; white-space: nowrap; color: #222; }
.wctl { display: flex; margin-left: auto; margin-right: 2px; }
.wb { width: 46px; height: 24px; }

.menu { height: 30px; display: flex; align-items: center; background: #f7f7f7; position: relative; }
.menus { display: flex; gap: 10px; padding-left: 7px; white-space: nowrap; width: 790px; letter-spacing: .1px; }
.promo { display: flex; align-items: center; padding-left: 2px; width: 148px; white-space: nowrap; gap: 4px; padding-top: 2px; }
.i12 { width: 12px; height: 12px; }
.g2 { margin-left: 15px; }
.gx { color: #222; }
.ask { width: 185px; height: 28px; background: #fff; color: #6a3a10; line-height: 28px; padding-left: 32px; }
.acct { margin-left: 3px; flex: 1; height: 28px; display: flex; align-items: center; gap: 5px; padding-left: 3px; background: #fafafa; }
.num13 { letter-spacing: .35px; }
.bean { margin-left: 5px; }
.bell { width: 16px; height: 20px; margin-left: 7px; }
.acct .more { margin-left: auto; }

.tbrow { display: flex; gap: 3px; }
.r1 { height: 26px; margin-bottom: 4px; }
.r2 { height: 26px; margin-bottom: 2px; padding-left: 3px; }
.r3 { height: 26px; margin-bottom: 2px; padding-left: 3px; }
.r4 { height: 28px; padding-left: 3px; }
.tb { display: flex; align-items: center; gap: 7px; background: linear-gradient(#fcfcfc, #f6f6f6); border-radius: 2px; white-space: nowrap; }
.sa { width: 150px; padding-left: 6px; gap: 6px; }
.sb { width: 548px; padding-left: 4px; }
.sc { flex: 1; padding-left: 2px; }
.sd { width: 788px; }
.se { width: 637px; padding-bottom: 2px; }
.sf { width: 420px; gap: 6px; padding-bottom: 2px; }
.sg { width: 1067px; }
.sh { width: 33px; padding-left: 6px; }
.more { margin-left: auto; padding-right: 4px; font-size: 14px; line-height: 14px; font-weight: 700; margin-top: -6px; }
.it { display: inline-flex; align-items: center; gap: 4px; height: 24px; line-height: 24px; flex: none; }
.off { color: #a8a8a8; }
.i { width: 16px; height: 16px; }
.sig { width: 13px; text-align: center; font: 700 15px/16px "Liberation Serif", serif; }
.wh { background: #fff; width: 50px; padding-left: 3px; margin-right: -7px; }
.drop { width: 13px; height: 24px; background: #f1f1f1; position: relative; display: flex; align-items: center; justify-content: center; }
.drop::before, .ar::before, .cba::before { content: ""; display: block; width: 0; height: 0; border: 3px solid transparent; border-top: 3px solid #111; border-bottom: 0; }
.ar { display: inline-flex; align-items: center; justify-content: center; width: 10px; height: 10px; }
.mn { width: 13px; margin-left: -7px; justify-content: flex-end; padding-right: 2px; }
.sf .mn { margin-left: -6px; }
.tight { width: 8px; margin-left: -6px; padding-right: 0; }
.t6 { width: 5px; }
.sep { width: 1px; height: 20px; background: #c8c8c8; margin: 0 -1px; flex: none; }
.hnd { width: 3px; height: 18px; flex: none; margin-left: 3px; margin-right: -5px; background-image: linear-gradient(#aaa 50%, transparent 50%); background-size: 2px 4px; background-repeat: repeat-y; }
.se .hnd { margin-right: -6px; }
.sf .hnd { margin-right: -2px; }
.si .hnd { margin-right: -2px; }
.cb { display: flex; width: 69px; height: 24px; background: #fff; margin-right: -4px; flex: none; justify-content: space-between; padding-left: 2px; line-height: 24px; }
.w1 { width: 57px; }
.w2 { width: 55px; margin-right: 0; }
.w3 { width: 58px; margin-right: 0; }
.lastc { margin-right: 0; }
.cba { width: 12px; background: #f4f4f4; display: flex; align-items: center; justify-content: center; }
.act { background: #d8e8f6; outline: 1px solid #0078d7; outline-offset: 0; padding: 0 3px; height: 26px; }

.main { height: 624px; display: flex; }
.side { width: 255px; margin-right: 4px; display: flex; flex-direction: column; }
.navh { height: 15px; background: #0a5ad6; color: #fff; display: flex; justify-content: space-between; align-items: center; padding-right: 3px; font-size: 13px; line-height: 15px; }
.navc { display: flex; gap: 8px; }
.n { width: 12px; height: 12px; }
.nbtn { height: 22px; margin: 1px 0 0 0; background: #f0f0f0; border: 1px solid #9c9c9c; text-align: center; line-height: 21px; font-size: 12px; flex: none; }
.panel { flex: 1; min-height: 0; background: #fff; border: 1px solid #9c9c9c; margin: 1px 0 0 2px; border-width: 2px 2px 1px 1px; overflow: hidden; display: flex; flex-direction: column; }
.ptool { height: 26px; display: flex; align-items: flex-start; gap: 2px; padding: 4px 0 0 4px; flex: none; }
.pm { width: 20px; height: 18px; }
.treewrap { flex: 1; min-height: 0; display: flex; padding-left: 1px; }
.tree { flex: 1; overflow: hidden; min-width: 0; }
.fr { height: 16px; display: flex; align-items: center; padding-left: 6px; position: relative; line-height: 16px; }
.chev { width: 9px; height: 16px; margin-right: 7px; position: relative; flex: none; }
.chev::before { content: ""; position: absolute; width: 6px; height: 6px; border: solid #888; border-width: 0 1.500px 1.500px 0; }
.chev.c::before { left: 0; top: 5px; transform: rotate(-45deg); }
.chev.o::before { left: 2px; top: 3px; transform: rotate(45deg); border-color: #555; }
.fr .i { margin-right: 5px; }
.grp { position: relative; }
.kids { position: relative; }
.kids::before { content: ""; position: absolute; left: 11px; top: 0; bottom: 8px; border-left: 1px dotted #777; }
.kr { height: 16px; display: flex; align-items: center; padding-left: 42px; position: relative; line-height: 16px; white-space: nowrap; }
.kr .i { margin-right: 4px; }
.kr::before { content: ""; position: absolute; left: 30px; top: 0; bottom: 0; border-left: 1px dotted #777; }
.kr:last-child::before { bottom: 8px; }
.kr::after { content: ""; position: absolute; left: 31px; top: 8px; width: 11px; border-top: 1px dotted #777; }
.hl { display: inline-flex; align-items: center; background: #d4d4d4; height: 16px; width: 57px; margin-left: -3px; padding-left: 3px; }
.vsb { width: 15px; margin-right: 3px; background: #f0f0f0; flex: none; display: flex; flex-direction: column; align-items: center; }
.sbu, .sbd, .sbl, .sbr { flex: none; display: block; position: relative; }
.sbu, .sbd { width: 15px; height: 15px; }
.sbu::before, .sbd::before, .sbl::before, .sbr::before { content: ""; position: absolute; width: 6px; height: 6px; border: solid #555; }
.sbu::before { border-width: 2px 0 0 2px; left: 4px; top: 6px; transform: rotate(45deg); }
.sbd::before { border-width: 0 2px 2px 0; left: 4px; top: 2px; transform: rotate(45deg); }
.vth { width: 15px; height: 293px; margin-top: 70px; background: #c8c8c8; }
.sbd { margin-top: auto; }
.low { margin-top: 1px; }
.low + .low { margin-bottom: 3px; }

.work { flex: 1; min-width: 0; display: flex; flex-direction: column; }
.canvas { height: 304px; background: #000; overflow: hidden; flex: none; }
.cad { width: 1107px; height: 304px; }
.big { font: 400 60px "Roboto", sans-serif; fill: #fff; }
.mag { fill: #ff20ff; }
.ax { font: 13px "Liberation Sans", sans-serif; fill: #aaa; text-anchor: middle; }

.snaprow { height: 32px; padding: 3px 0 0 212px; flex: none; }
.si { width: 675px; height: 25px; gap: 4px; padding-left: 0; }
.si > .it { margin-left: 3px; }
.si > .nomg { margin-left: 0; }
.si .cb { margin-left: 1px; height: 24px; }
.pair { display: flex; margin-left: -1px; }
.on { background: #d8e8f6; border: 1px solid #0078d7; padding: 0 3px; width: 51px; height: 23px; }
.hnd.sp { margin-left: 4px; }
.gl { color: #777; font: 12px/16px "Liberation Sans", sans-serif; margin: 0 -1px; }
.gl.y { margin-left: 3px; margin-right: -3px; }
.spin { width: 58px; height: 23px; border: 1px solid #777; background: #f6f6f6; display: flex; align-items: center; justify-content: flex-end; color: #808080; font: 13px/21px "Liberation Sans", sans-serif; }
.spin.wide { width: 67px; }
.sa2 { width: 14px; height: 21px; margin-left: 5px; position: relative; }
.sa2::before, .sa2::after { content: ""; position: absolute; left: 4px; border: 3px solid transparent; }
.sa2::before { top: 2px; border-bottom: 3px solid #555; border-top: 0; }
.sa2::after { bottom: 2px; border-top: 3px solid #555; border-bottom: 0; }
.chk { width: 11px; height: 11px; border: 1px solid #888; background: #f8f8f8; margin-left: 7px; }
.rt { margin: 0 0 0 5px; }

.prop { flex: 1; min-height: 0; display: flex; }
.grip { width: 13px; flex: none; padding: 3px 0 0 1px; background-image: radial-gradient(#c4c4c4 1px, transparent 1.200px); background-size: 4px 4px; }
.xbox { width: 12px; height: 12px; }
.pcol { flex: 1; min-width: 0; display: flex; flex-direction: column; padding-top: 3px; }
.ptb { height: 26px; flex: none; display: flex; align-items: center; gap: 7px; padding-left: 3px; background: linear-gradient(#fff, #f1f1f1); white-space: nowrap; }
.pt { margin-left: 3px; }
.gridbox { height: 172px; background: #fff; border: solid #a6a6a6; border-width: 1px 2px 2px 1px; padding-top: 1px; display: flex; flex-direction: column; }
.grid { display: grid; grid-template-columns: 30px 42px 80px 101px 71px 72px 41px 80px 81px 81px 81px 84px 38px 42px 80px 83px; grid-template-rows: 18px 19px 20px; }
.gh { background: linear-gradient(#fff, #ececec); border: solid #c8c8c8; border-width: 0 1px 1px 0; text-align: center; line-height: 17px; white-space: nowrap; overflow: hidden; }
.tall { grid-row: span 2; line-height: 36px; }
.wide3 { grid-column: span 3; }
.yel { background: linear-gradient(#fdf0cc, #f5c468); color: #800080; font-size: 13px; }
.gd { background: #a6c9ed; border: solid #c4c4c4; border-width: 0 1px 1px 0; padding-left: 3px; line-height: 19px; white-space: nowrap; overflow: hidden; font-size: 11px; }
.gd u { text-decoration: underline; }
.gd i { line-height: 19px; }
.rh { background: #ffd894; color: #800000; text-align: center; padding: 0; font: 10px/19px "Liberation Mono", monospace; }
.cur { background: #85b8e8; outline: 3px solid #000; outline-offset: -2px; position: relative; overflow: visible; padding-left: 3px; }
.cur::after { content: ""; position: absolute; right: -4px; bottom: -3px; width: 5px; height: 5px; background: #000; border: 1px solid #fff; }
.hsb { margin-top: auto; height: 15px; margin-bottom: 2px; background: #f0f0f0; display: flex; align-items: stretch; flex: none; }
.sbl { width: 15px; }
.sbr { width: 18px; }
.sbl::before { border-width: 0 0 2px 2px; left: 5px; top: 4px; transform: rotate(45deg); }
.sbr::before { border-width: 2px 2px 0 0; left: 5px; top: 4px; transform: rotate(45deg); }
.hth { width: 404px; background: #c8c8c8; margin-left: auto; }

.status { height: 20px; display: flex; gap: 2px; background: #f0f0f0; flex: none; }
.st { background: #fbfbfb; border: 1px solid #dcdcdc; white-space: nowrap; overflow: hidden; line-height: 18px; padding-left: 1px; }
.st i { line-height: 18px; }
.s1 { width: 148px; } .s2 { width: 78px; } .s3 { width: 98px; } .s4 { width: 48px; } .s5 { width: 913px; } .s6 { flex: 1; }

.task { height: 40px; flex: none; display: flex; color: #e8e8e8; background: linear-gradient(90deg, #04101a 1297px, #000 1297px, #000 1360px, #04101a 1360px); }
.start { width: 48px; background: #000; display: flex; align-items: center; justify-content: center; }
.w16 { width: 16px; height: 16px; }
.search { width: 344px; background: #333; display: flex; align-items: center; padding-left: 9px; }
.ring { width: 22px; height: 21px; border: 2.500px solid #e8e8e8; border-radius: 50%; flex: none; }
.stxt { margin-left: 5px; font-size: 14px; color: #8a8a8a; width: 270px; white-space: nowrap; }
.smic { width: 16px; height: 18px; }
.slots { display: grid; grid-template-columns: 49px 51px 50px 51px 52px 48px 50px 49px 50px 48px; }
.slot { display: flex; align-items: center; justify-content: center; position: relative; }
.tv { width: 20px; height: 16px; }
.t24 { width: 24px; height: 24px; }
.run::after { content: ""; position: absolute; left: 5px; right: 5px; bottom: 0; height: 2px; background: #76b9ed; }
.cura { background: #3a4148; }
.cura::after { left: 0; right: 0; }
.tray { display: grid; grid-template-columns: 68px 48px 16px 32px 22px 28px 22px 24px 30px 27px 30px 78px 36px; align-items: center; justify-items: center; }
.tt { color: #ddd; }
.cpu { text-align: center; line-height: 20px; white-space: nowrap; margin-top: -2px; }
.t18 { width: 18px; height: 18px; }
.caret { width: 12px; height: 8px; }
.tk { width: 22px; height: 16px; }
.zh { font-size: 13px; }
.t16 { width: 16px; height: 16px; }
.clock { text-align: center; line-height: 21px; font-size: 13px; white-space: nowrap; margin-top: -2px; }
.tmsg { width: 16px; height: 18px; }

.badge { position: absolute; left: 1131px; top: -27px; width: 47px; height: 47px; border-radius: 50%; background: #4caf50; border: 3px solid #c6cfc6; box-shadow: 0 1px 2px #888; color: #fff; font-weight: 700; text-align: center; }
.badge span { display: block; margin-top: 26px; line-height: 16px; }
.ime { position: absolute; left: 769px; top: 15px; display: flex; align-items: center; }
.imes { width: 27px; height: 27px; position: relative; z-index: 1; }
.imebar { width: 184px; height: 24px; margin-left: -5px; background: #f4f8fc; border: 1px solid #a8c4dc; display: flex; align-items: center; gap: 4px; padding-left: 11px; color: #1c70c0; }
.imebar b { font-size: 15px; width: 21px; }
.dot { width: 14px; font-weight: 700; font-size: 13px; }
.i18 { width: 18px; height: 18px; }
.redbox { position: absolute; left: 1108px; top: 508px; width: 181px; height: 112px; border: solid #f00; border-width: 7px 8px 8px 8px; }
```
